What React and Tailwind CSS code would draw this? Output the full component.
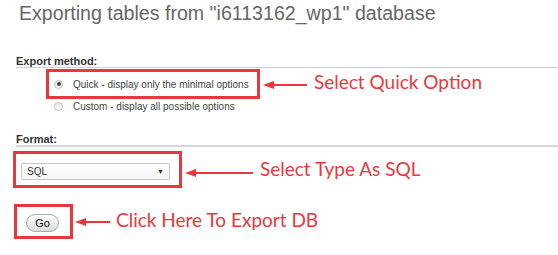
import React from 'react';

const RED = '#e8383d';

function Arrow({ width }) {
  // left-pointing annotation arrow
  return (
    <svg width={width} height="10" viewBox={`0 0 ${width} 10`} className="block shrink-0">
      <polygon points={`0,5 11,1 11,9`} fill={RED} />
      <rect x="9" y="4" width={width - 9} height="2" fill={RED} />
    </svg>
  );
}

function Radio({ checked }) {
  return (
    <span className="flex h-[9px] w-[9px] shrink-0 items-center justify-center rounded-full border border-[#c4c4c4] bg-gradient-to-b from-[#e6e6e6] to-[#f8f8f8]">
      {checked && <span className="h-[4px] w-[4px] rounded-full bg-[#444]" />}
    </span>
  );
}

function Note({ children }) {
  return (
    <span className="whitespace-nowrap text-[19px] leading-[20px] text-[#e8383d]" style={{ fontFamily: 'Lato, "Open Sans", sans-serif' }}>
      {children}
    </span>
  );
}

export default function App() {
  return (
    <div className="relative h-[255px] w-[558px] overflow-hidden bg-white text-[#333]" style={{ fontFamily: '"Liberation Sans", Arial, sans-serif' }}>
      <h1 className="ml-[19px] mt-[1px] whitespace-nowrap text-[19.6px] leading-[24px] text-[#666]">
        Exporting tables from "i6113162_wp1" database
      </h1>

      {/* Export method */}
      <div className="ml-[16px] mt-[30px] h-[13px] border-b border-[#cfcfcf] text-[11px] font-bold leading-[12px] text-[#333]">
        Export method:
      </div>
      <div className="mt-[1px] flex items-center">
        <div className="ml-[46px] flex h-[30px] w-[214px] items-center border-[3px] border-[#e8383d] pl-[5px]">
          <Radio checked />
          <span className="ml-[10px] whitespace-nowrap text-[10px] leading-[13px] text-[#444]">
            Quick - display only the minimal options
          </span>
        </div>
        <div className="ml-[3px] mt-[2px]">
          <Arrow width={44} />
        </div>
        <div className="ml-[7px]">
          <Note>Select Quick Option</Note>
        </div>
      </div>
      <div className="ml-[54px] mt-[1px] flex h-[12px] items-center">
        <Radio />
        <span className="ml-[10px] whitespace-nowrap text-[10px] leading-[13px] text-[#444]">
          Custom - display all possible options
        </span>
      </div>

      {/* Format */}
      <div className="ml-[16px] mt-[21px] h-[14px] border-b-2 border-[#d6d6d6] text-[11px] font-bold leading-[12px] text-[#333]">
        Format:
      </div>
      <div className="mt-[4px] flex items-center">
        <div className="ml-[13px] h-[37px] w-[169px] border-[3px] border-[#e8383d] pl-[5px] pt-[9px]">
          <div className="flex h-[17px] w-[149px] items-center justify-between rounded-[2px] border border-[#c8c8c8] bg-gradient-to-b from-white to-[#f6f6f6] pl-[5px] pr-[5px]">
            <span className="text-[10px] leading-[13px] text-[#333]">SQL</span>
            <span className="text-[7px] leading-[8px] text-[#333]">▼</span>
          </div>
        </div>
        <div className="ml-[3px] mt-[7px]">
          <Arrow width={68} />
        </div>
        <div className="ml-[7px] mt-[3px]">
          <Note>Select Type As SQL</Note>
        </div>
      </div>

      {/* Go */}
      <div className="mt-[16px] flex items-center">
        <div className="ml-[14px] h-[35px] w-[59px] border-[3px] border-[#e8383d] pl-[9px] pt-[7px]">
          <button className="flex h-[18px] w-[33px] items-center justify-center rounded-full border border-[#aaa] bg-gradient-to-b from-white to-[#dcdcdc] text-[11px] leading-[13px] text-[#111]">
            Go
          </button>
        </div>
        <div className="ml-[2px] mt-[1px]">
          <Arrow width={35} />
        </div>
        <div className="ml-[6px] mt-[1px]">
          <Note>Click Here To Export DB</Note>
        </div>
      </div>
    </div>
  );
}
